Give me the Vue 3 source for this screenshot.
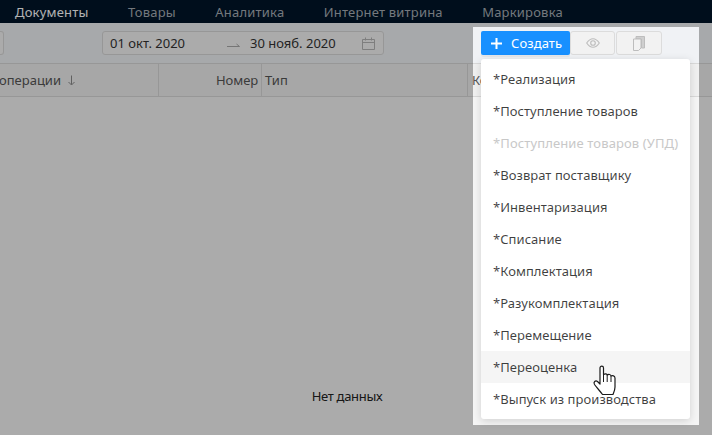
<script setup>
const nav = [
  { label: 'Документы', active: true },
  { label: 'Товары' },
  { label: 'Аналитика' },
  { label: 'Интернет витрина' },
  { label: 'Маркировка' }
]
const items = [
  { label: '*Реализация' },
  { label: '*Поступление товаров' },
  { label: '*Поступление товаров (УПД)', disabled: true },
  { label: '*Возврат поставщику' },
  { label: '*Инвентаризация' },
  { label: '*Списание' },
  { label: '*Комплектация' },
  { label: '*Разукомплектация' },
  { label: '*Перемещение' },
  { label: '*Переоценка', hover: true },
  { label: '*Выпуск из производства' }
]
</script>

<template>
  <div class="page">
    <nav class="nav">
      <span v-for="n in nav" :key="n.label" class="nav-item" :class="{ active: n.active }">{{ n.label }}</span>
    </nav>
    <div class="toolbar">
      <div class="stub"></div>
      <div class="range">
        <span class="date">01 окт. 2020</span>
        <svg class="arrow" width="14" height="6" viewBox="0 0 14 6"><path d="M0 4.500h12.500M9.500 2l3 2.500" fill="none" stroke="#a8a8a8" stroke-width="1"/></svg>
        <span class="date">30 нояб. 2020</span>
        <svg class="cal" width="13" height="13" viewBox="0 0 13 13"><path d="M.5 2.500h12v10H.5zM.5 5.500h12M3.500 .5v3M9.500 .5v3" fill="none" stroke="#b5b5b5"/></svg>
      </div>
      <div class="actions">
        <button class="create">
          <svg width="11" height="11" viewBox="0 0 11 11"><path d="M5.500 0v11M0 5.500h11" stroke="#fff" stroke-width="2" fill="none"/></svg>
          <span>Создать</span>
        </button>
        <button class="ghost">
          <svg width="14" height="10" viewBox="0 0 14 10"><path d="M.7 5C2.800 1.800 4.700 .7 7 .7S11.200 1.800 13.300 5C11.200 8.200 9.300 9.300 7 9.300S2.800 8.200 .7 5z" fill="none" stroke="#bdbdbd" stroke-width="1.100"/><circle cx="7" cy="5" r="2.300" fill="none" stroke="#bdbdbd" stroke-width="1.100"/></svg>
        </button>
        <button class="ghost wide">
          <svg width="12" height="15" viewBox="0 0 12 15"><path d="M3 .5h8.500v11.500H8.500V3H3z" fill="#cfcfcf" stroke="#bdbdbd"/><path d="M.5 3h7.500v9L5.500 14.500H.5z" fill="#f2f2f2" stroke="#bdbdbd"/></svg>
        </button>
      </div>
    </div>
    <div class="thead">
      <div class="th th-date">операции
        <svg width="9" height="11" viewBox="0 0 9 11"><path d="M4.500 .5v9M1.500 7l3 3 3-3" fill="none" stroke="#8a8a8a"/></svg>
      </div>
      <div class="th th-num">Номер</div>
      <div class="th th-type">Тип</div>
      <div class="th th-agent">Контрагент</div>
    </div>
    <div class="tbody"><span class="empty">Нет данных</span></div>

    <ul class="menu">
      <li v-for="i in items" :key="i.label" :class="{ disabled: i.disabled, hover: i.hover }">{{ i.label }}</li>
    </ul>

    <div class="spot"></div>

    <svg class="cursor" width="26" height="33" viewBox="0 0 26 33">
      <path d="M8 3C8 .5 11.500 .5 11.500 3V9.500C13 8.500 15 8.500 15.200 10C16.500 9 18.800 9.300 19 11C20.500 10.300 22.800 10.800 23 13V22C23 25 22 27 21 29.500H10.500C8 26 5 23 2.500 19.500C1 17 3.500 15 5.500 16.500L8 19Z" fill="#fff" stroke="#1a1a1a" stroke-width="1.200" stroke-linejoin="round"/>
      <path d="M11.500 9.500V17M15.200 10V17M19 11V17" stroke="#1a1a1a" stroke-width="1" fill="none"/>
    </svg>
  </div>
</template>

<style scoped>
.page {
  position: relative;
  width: 712px;
  height: 435px;
  overflow: hidden;
  background: #f5f5f5;
  font-family: "Noto Sans", "Open Sans", sans-serif;
  font-size: 13px;
  color: #1f1f1f;
}
.nav {
  height: 23px;
  background: #001529;
  display: flex;
  align-items: center;
  padding-left: 15px;
  gap: 39.400px;
  letter-spacing: 0.2px;
  color: #a6adb4;
}
.nav-item.active { color: #fff; }
.toolbar {
  height: 41px;
  background: #f0f2f5;
  border-bottom: 1px solid #d9d9d9;
  display: flex;
  align-items: center;
  box-sizing: border-box;
}
.stub {
  width: 4px;
  height: 24px;
  box-sizing: border-box;
  border: 1px solid #d9d9d9;
  border-left: 0;
  border-radius: 0 3px 3px 0;
  background: #f5f5f5;
  margin-right: 98px;
}
.range {
  width: 282px;
  height: 24px;
  box-sizing: border-box;
  border: 1px solid #d9d9d9;
  border-radius: 3px;
  background: #f5f5f5;
  display: flex;
  align-items: center;
  padding: 0 8px 0 7px;
  color: #333;
  margin-right: 97px;
}
.range .date:first-child { width: 117px; }
.arrow { margin-right: 9px; margin-top: 3px; }
.cal { margin-left: auto; }
.actions { display: flex; gap: 1px; height: 24px; }
button {
  box-sizing: border-box;
  height: 24px;
  padding: 0;
  margin: 0;
  display: flex;
  align-items: center;
  justify-content: center;
  font: inherit;
}
.create {
  width: 89px;
  margin-right: -1px;
  border: 0;
  border-radius: 2px;
  background: #1890ff;
  color: #fff;
  gap: 9px;
  justify-content: flex-start;
  padding-left: 10px;
  letter-spacing: 0.1px;
  box-shadow: 0 2px 0 rgba(0, 0, 0, 0.045);
}
.ghost {
  width: 45px;
  background: #f2f2f2;
  border: 1px solid #dcdcdc;
  border-radius: 3px;
}
.ghost.wide { width: 46px; }
.thead {
  height: 33px;
  background: #f0f0f0;
  border-bottom: 1px solid #d9d9d9;
  box-sizing: border-box;
  display: flex;
  color: #555;
}
.th {
  display: flex;
  align-items: center;
  padding: 0 3px;
  white-space: nowrap;
  box-sizing: border-box;
}
.th svg { margin-left: 6px; }
.th-date {
  width: 160px;
  padding: 0;
  border-right: 1px solid #d9d9d9;
  margin-left: -1px;
}
.th-num {
  width: 103px;
  justify-content: flex-end;
  border-right: 1px solid #d9d9d9;
  letter-spacing: -0.1px;
}
.th-type {
  width: 206px;
  border-right: 1px solid #d9d9d9;
}
.th-agent {
  padding: 0 0 0 4px;
}
.tbody {
  height: 338px;
  display: flex;
  align-items: flex-end;
  justify-content: center;
}
.empty {
  margin-bottom: 30px;
  margin-left: -18px;
  color: #222;
  letter-spacing: -0.3px;
}
.menu {
  position: absolute;
  left: 481px;
  top: 59px;
  list-style: none;
  margin: 0;
  padding: 4px 0;
  height: 360px;
  width: 209px;
  box-sizing: border-box;
  background: #fff;
  border-radius: 3px;
  box-shadow: 0 2px 8px rgba(0, 0, 0, 0.15);
}
.menu li {
  height: 32px;
  line-height: 32px;
  padding: 0 12px;
  color: rgba(0, 0, 0, 0.75);
  white-space: nowrap;
  letter-spacing: 0.05px;
}
.menu li.disabled { color: #c8c8c8; letter-spacing: 0.12px; }
.menu li.hover { background: #f5f5f5; }
.spot {
  position: absolute;
  left: 473px;
  top: 27px;
  width: 226px;
  height: 398px;
  box-shadow: 0 0 0 800px rgba(0, 0, 0, 0.3);
  pointer-events: none;
}
.cursor {
  position: absolute;
  left: 592px;
  top: 365px;
}
</style>
